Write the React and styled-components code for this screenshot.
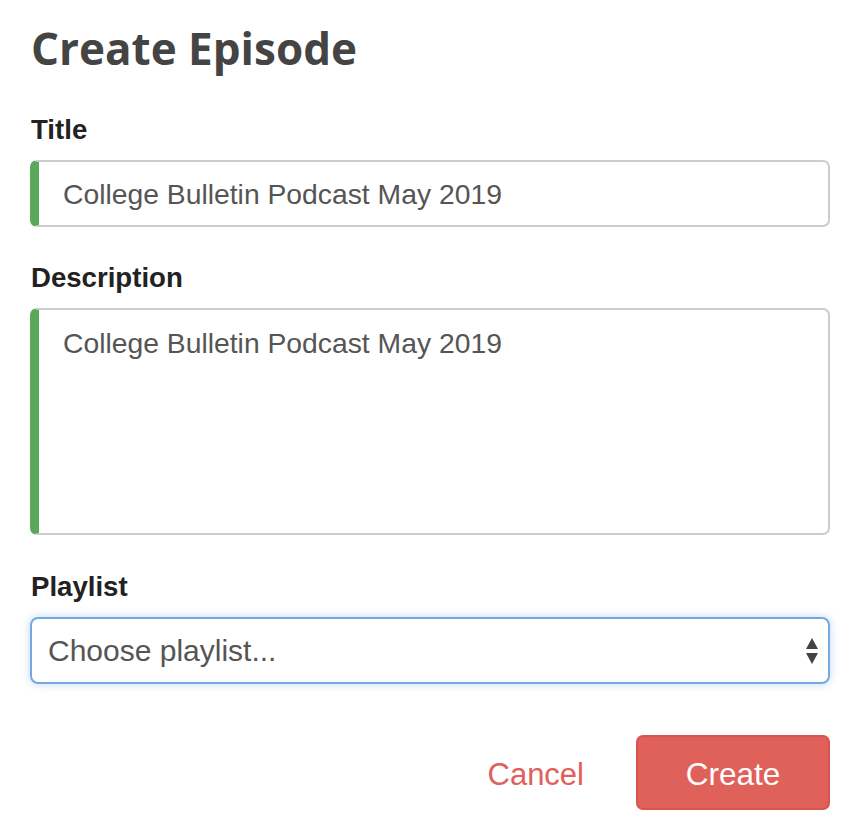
import React from "react";
import styled, { createGlobalStyle } from "styled-components";

const Global = createGlobalStyle`
  html, body { margin: 0; padding: 0; background: #fff; }
  body { font-family: "Liberation Sans", Arial, sans-serif; }
  * { box-sizing: border-box; }
`;

const Page = styled.div`
  padding: 18px 32px 0 30px;
  width: 862px;
`;

const Heading = styled.h1`
  margin: 0 0 36px 1px;
  font-family: "Open Sans", sans-serif;
  font-weight: 700;
  font-size: 44px;
  line-height: 60px;
  color: #444;
`;

const Field = styled.div`
  display: flex;
  flex-direction: column;
  margin-bottom: ${(p) => p.$gap}px;
`;

const Label = styled.label`
  font-family: "Liberation Sans", Arial, sans-serif;
  font-weight: 700;
  font-size: 27.6px;
  line-height: 32px;
  color: #222;
  margin: 0 0 14px 1px;
`;

const TextBox = styled.div`
  height: ${(p) => p.$h}px;
  border: 2px solid #ccc;
  border-left: 9px solid #5ba85a;
  border-radius: 7px;
  padding: ${(p) => p.$pt}px 20px 0 24px;
  font-size: 28.3px;
  line-height: 32px;
  color: #555;
  background: #fff;
`;

const Select = styled.div`
  position: relative;
  height: 67px;
  border: 2px solid #73a9e2;
  border-radius: 8px;
  box-shadow: 0 0 8px rgba(115, 169, 226, 0.45);
  padding: 0 40px 0 16px;
  display: flex;
  align-items: center;
  font-size: 30px;
  color: #555;
`;

const Arrows = styled.svg`
  position: absolute;
  right: 10px;
  top: 50%;
  transform: translateY(-50%);
`;

const Actions = styled.div`
  display: flex;
  justify-content: flex-end;
  align-items: center;
  gap: 52px;
  margin-top: 51px;
`;

const CancelLink = styled.span`
  font-size: 31px;
  color: #e0605a;
  padding-top: 4px;
`;

const CreateButton = styled.button`
  width: 194px;
  height: 75px;
  border: 2px solid #d9534f;
  border-radius: 7px;
  background: #e0605a;
  color: #fff;
  font-family: "Liberation Sans", Arial, sans-serif;
  font-size: 31.5px;
  padding: 4px 0 0;
`;

export default function App() {
  return (
    <>
      <Global />
      <Page>
        <Heading>Create Episode</Heading>
        <Field $gap={35}>
          <Label>Title</Label>
          <TextBox $h={67} $pt={16}>College Bulletin Podcast May 2019</TextBox>
        </Field>
        <Field $gap={36}>
          <Label>Description</Label>
          <TextBox $h={227} $pt={17}>College Bulletin Podcast May 2019</TextBox>
        </Field>
        <Field $gap={0}>
          <Label>Playlist</Label>
          <Select>
            Choose playlist...
            <Arrows width="12" height="26" viewBox="0 0 12 26">
              <path d="M6 0 L12 11 L0 11 Z" fill="#444" />
              <path d="M0 15 L12 15 L6 26 Z" fill="#444" />
            </Arrows>
          </Select>
        </Field>
        <Actions>
          <CancelLink>Cancel</CancelLink>
          <CreateButton>Create</CreateButton>
        </Actions>
      </Page>
    </>
  );
}
